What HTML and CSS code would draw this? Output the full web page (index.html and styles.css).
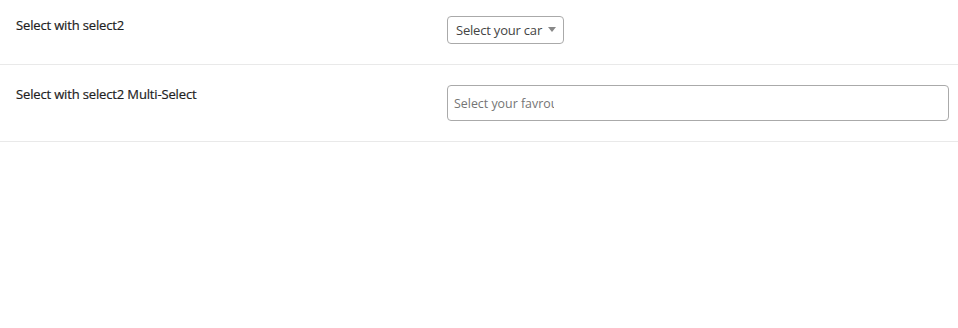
FILE: index.html
```html
<!DOCTYPE html>
<html lang="en">
<head>
  <meta charset="UTF-8">
  <meta name="viewport" content="width=device-width, initial-scale=1.0">
  <title>Select2 demo</title>
  <link rel="stylesheet" href="styles.css">
</head>
<body>
  <div class="form-row">
    <label class="form-label">Select with select2</label>
    <div class="form-field">
      <span class="select2-single">
        <span class="select2-text">Select your car</span>
        <span class="select2-arrow"></span>
      </span>
    </div>
  </div>

  <div class="form-row multi">
    <label class="form-label">Select with select2 Multi-Select</label>
    <div class="form-field">
      <span class="select2-multi">
        <span class="select2-search">Select your favrourite colors</span>
      </span>
    </div>
  </div>
</body>
</html>
```

FILE: styles.css
```css
body {
  margin: 0;
  padding: 0;
  font-family: 'Open Sans', 'Noto Sans', sans-serif;
  background: #fff;
  color: #212529;
}

.form-row {
  display: grid;
  grid-template-columns: 431px 1fr;
  padding: 16px 9px 20px 16px;
  border-bottom: 1px solid #e9e9e9;
  height: 28px;
}

.form-row.multi {
  padding-top: 20px;
  height: 36px;
}

.form-label {
  font-size: 13px;
  color: #1e1e1e;
  line-height: 18px;
  letter-spacing: -0.15px;
  -webkit-text-stroke: 0.2px #1e1e1e;
}

.form-field {
  display: flex;
  align-items: flex-start;
}

.select2-single {
  display: flex;
  align-items: center;
  box-sizing: border-box;
  height: 28px;
  padding: 0 7px 0 8px;
  border: 1px solid #aaa;
  border-radius: 4px;
  background: #fff;
}

.select2-text {
  font-size: 13px;
  color: #444;
  letter-spacing: -0.2px;
}

.select2-arrow {
  width: 0;
  height: 0;
  margin-left: 6px;
  margin-top: -2px;
  border-left: 4px solid transparent;
  border-right: 4px solid transparent;
  border-top: 5px solid #888;
}

.select2-multi {
  display: flex;
  align-items: center;
  box-sizing: border-box;
  width: 100%;
  height: 36px;
  padding: 0 6px;
  border: 1px solid #aaa;
  border-radius: 4px;
  background: #fff;
}

.select2-search {
  display: block;
  width: 100px;
  overflow: hidden;
  white-space: nowrap;
  font-size: 12.4px;
  color: #757575;
}
```
